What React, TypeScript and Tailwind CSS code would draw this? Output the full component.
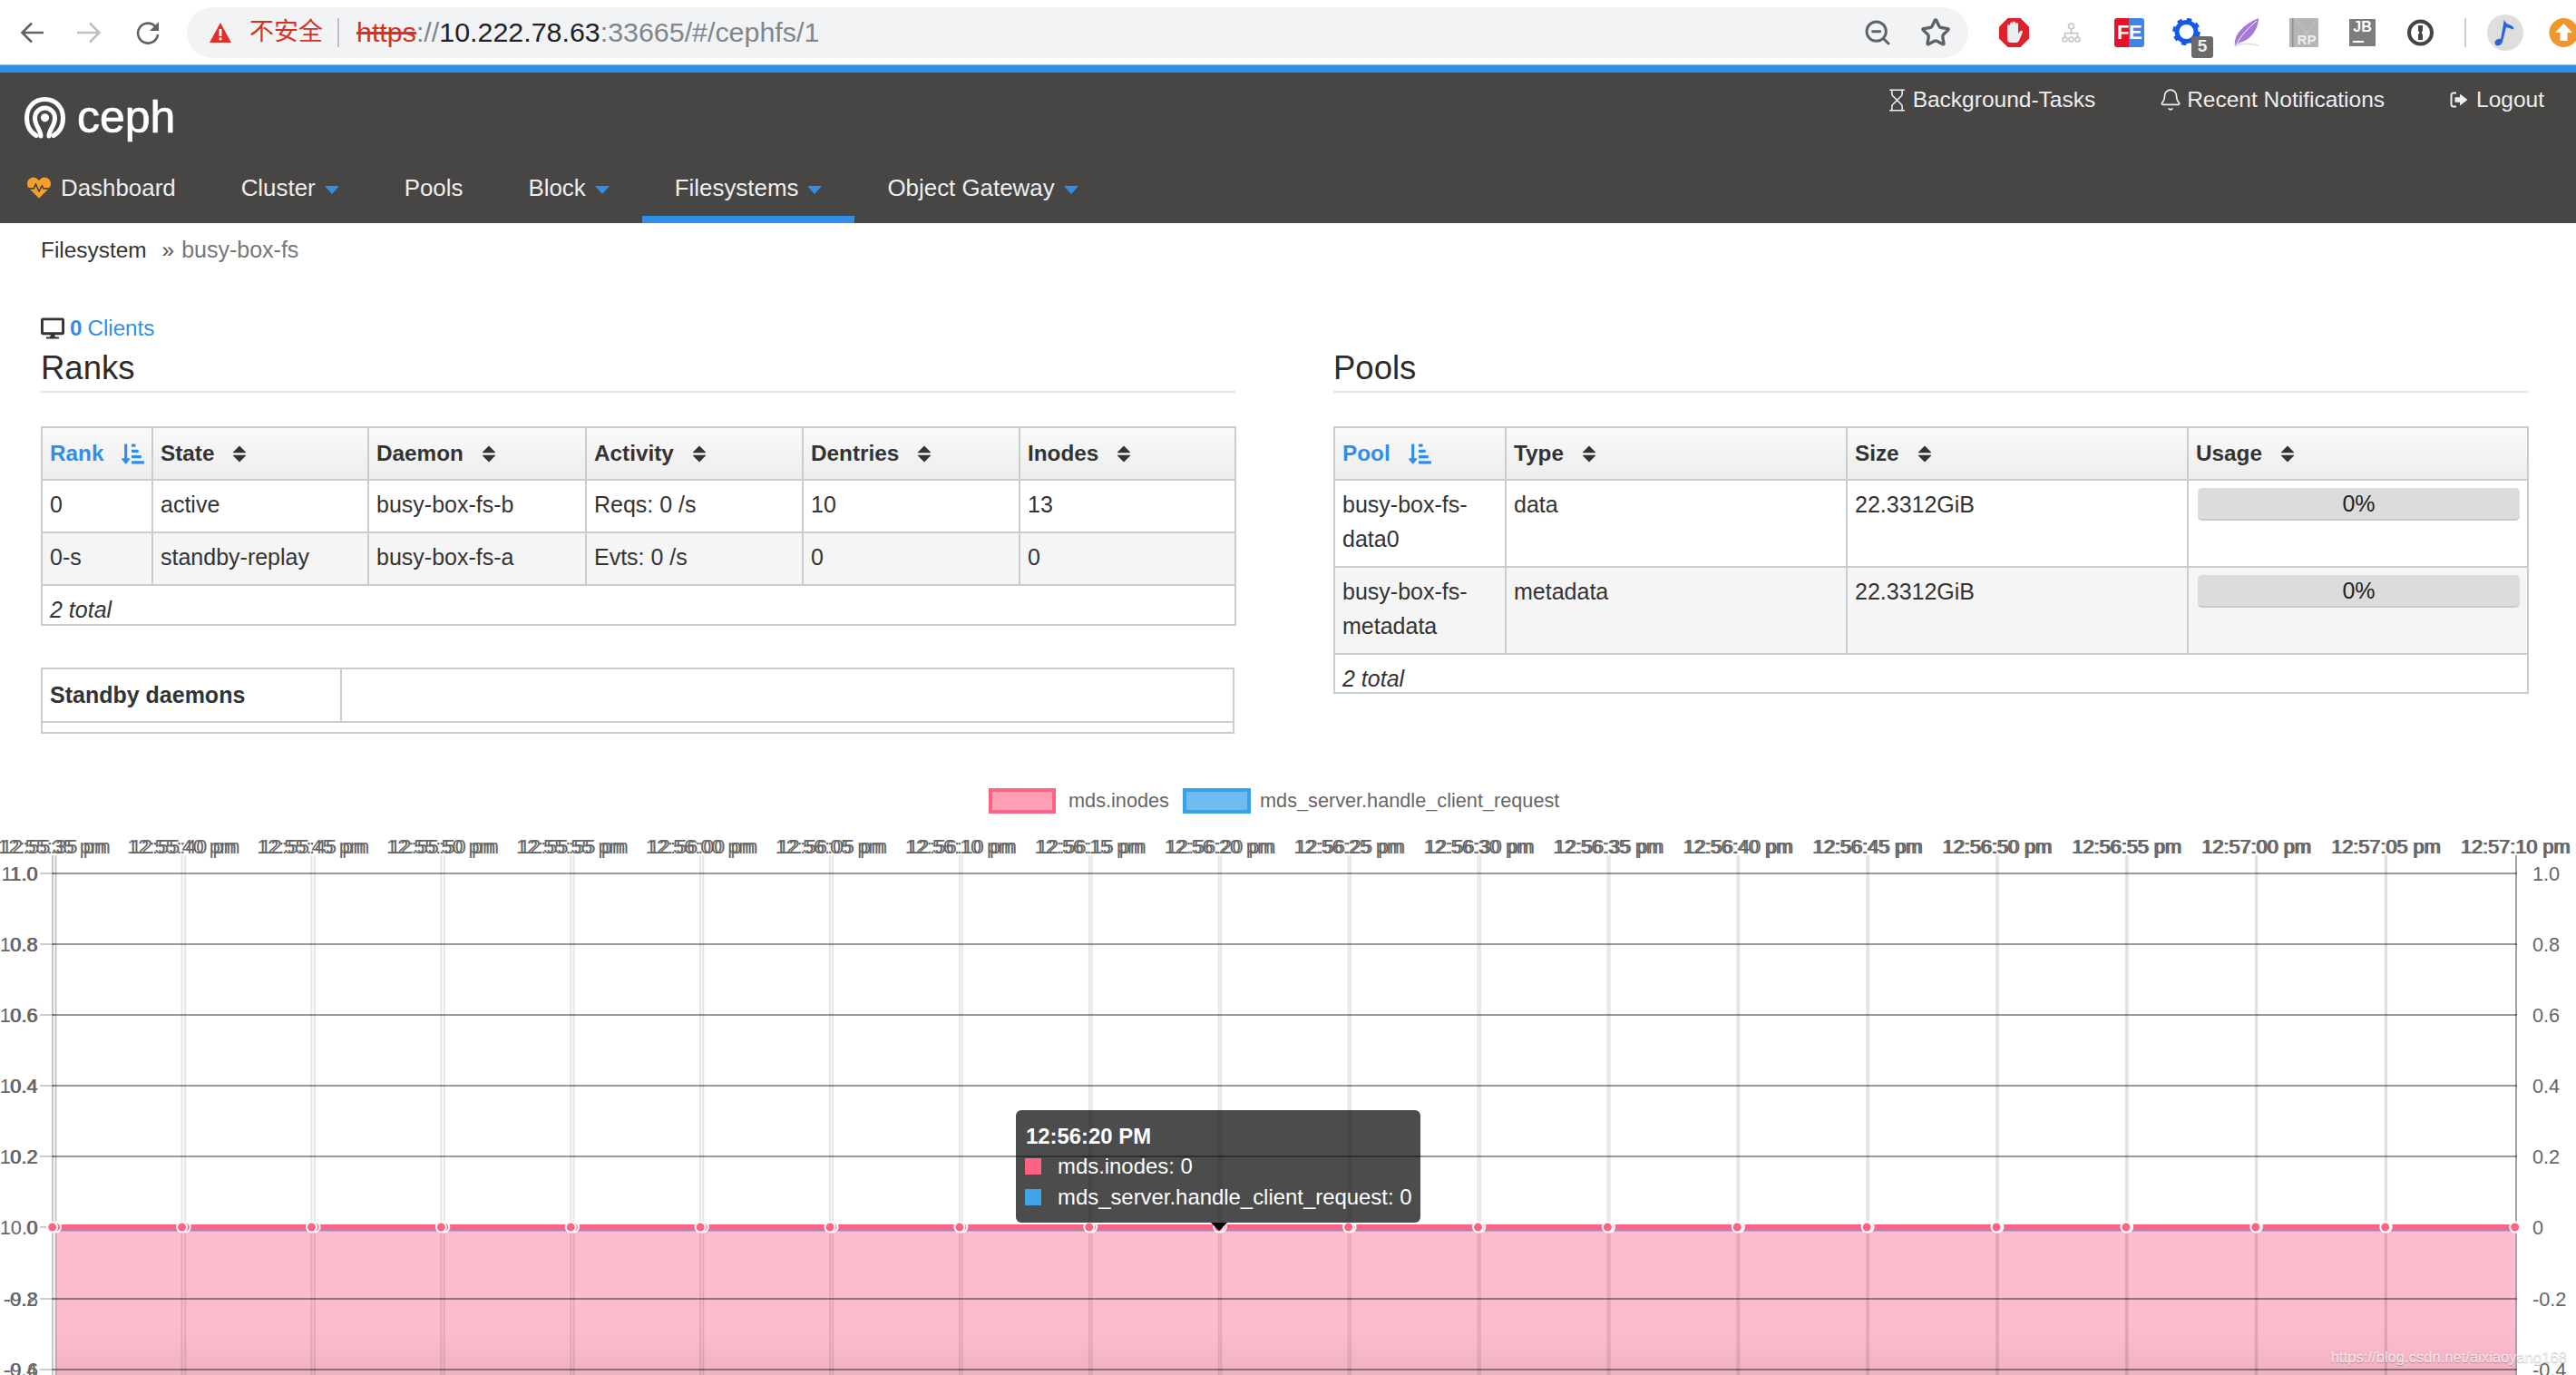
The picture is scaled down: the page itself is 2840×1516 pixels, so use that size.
import React from "react";
import { FaDesktop, FaHeartbeat, FaSortAmountDownAlt } from "react-icons/fa";
import { Bell, Hourglass, Star, ZoomOut } from "lucide-react";

const CHART_TOP = 860;
const Y_ROWS = [963, 1041, 1119, 1197, 1275, 1353, 1432, 1510];
const LEFT_A = ["11.0", "10.8", "10.6", "10.4", "10.2", "10.0", "-9.8", "-9.6"];
const LEFT_B = ["1.0", "0.8", "0.6", "0.4", "0.2", "0", "-0.2", "-0.4"];

// the page has two charts drawn on top of each other, the offset fades towards the right
const xA = (i: number) => 57.7 + 142.89 * i;
const xB = (i: number) => 61.5 + 142.76 * i;
const POINTS = Array.from({ length: 20 }, (_, i) => i);

const timeLabel = (i: number) => {
  const total = 12 * 3600 + 55 * 60 + 35 + i * 5;
  const m = Math.floor(total / 60) % 60;
  const s = total % 60;
  return `12:${String(m).padStart(2, "0")}:${String(s).padStart(2, "0")} pm`;
};

const Caret = () => (
  <span className="ml-[10px] mt-[4px] h-0 w-0 border-x-[8px] border-t-[9px] border-x-transparent border-t-[#2f8fe8]" />
);

const NavItem = ({ label, caret, active }: { label: string; caret?: boolean; active?: boolean }) => (
  <div
    className={`flex h-full items-center px-[36px] pt-[8px] border-b-[8px] ${
      active ? "border-[#2f8fe8]" : "border-transparent"
    }`}
  >
    <span>{label}</span>
    {caret && <Caret />}
  </div>
);

const SortArrows = () => (
  <svg width="16" height="19" viewBox="0 0 16 19" className="ml-[20px] shrink-0">
    <path d="M8 0.5 L15 7.5 Q15.5 8.2 14.5 8.2 L1.5 8.2 Q0.5 8.2 1 7.5 Z" fill="#333" />
    <path d="M8 18.5 L15 11.5 Q15.5 10.8 14.5 10.8 L1.5 10.8 Q0.5 10.8 1 11.5 Z" fill="#333" />
  </svg>
);

const HeaderCell = ({ label, sorted }: { label: string; sorted?: boolean }) => (
  <th className="border-2 border-[#ccc] bg-gradient-to-b from-[#fafafa] to-[#ededed] px-[8px] text-left align-middle text-[24.3px]">
    <div className={`flex items-center font-bold ${sorted ? "text-[#2f8fe8]" : "text-[#333]"}`}>
      <span>{label}</span>
      {sorted ? <FaSortAmountDownAlt size={25} className="ml-[20px] shrink-0" /> : <SortArrows />}
    </div>
  </th>
);

const Cell = ({ children }: { children: React.ReactNode }) => (
  <td className="border-2 border-[#ccc] px-[8px] pt-[7px] align-top">{children}</td>
);

const Usage = () => (
  <td className="border-2 border-[#ccc] pl-[10px] pr-[8px] pt-[8px] align-top">
    <div className="flex h-[36px] items-center justify-center rounded-[5px] border-b-2 border-[#c9c9c9] bg-[#dcdcdc] text-[#222]">
      0%
    </div>
  </td>
);

const SectionTitle = ({ title }: { title: string }) => (
  <div className="flex h-[52px] items-center border-b-2 border-[#e6e6e6] text-[36.5px] text-[#2b2b2b]">
    {title}
  </div>
);

const RanksTable = () => (
  <table className="mt-[37px] w-[1316px] table-fixed border-collapse leading-[38px]">
    <colgroup>
      <col className="w-[122px]" />
      <col className="w-[238px]" />
      <col className="w-[240px]" />
      <col className="w-[239px]" />
      <col className="w-[239px]" />
      <col className="w-[238px]" />
    </colgroup>
    <thead>
      <tr className="h-[58px]">
        <HeaderCell label="Rank" sorted />
        <HeaderCell label="State" />
        <HeaderCell label="Daemon" />
        <HeaderCell label="Activity" />
        <HeaderCell label="Dentries" />
        <HeaderCell label="Inodes" />
      </tr>
    </thead>
    <tbody>
      <tr className="h-[58px]">
        <Cell>0</Cell>
        <Cell>active</Cell>
        <Cell>busy-box-fs-b</Cell>
        <Cell>Reqs: 0 /s</Cell>
        <Cell>10</Cell>
        <Cell>13</Cell>
      </tr>
      <tr className="h-[58px] bg-[#f5f5f5]">
        <Cell>0-s</Cell>
        <Cell>standby-replay</Cell>
        <Cell>busy-box-fs-a</Cell>
        <Cell>Evts: 0 /s</Cell>
        <Cell>0</Cell>
        <Cell>0</Cell>
      </tr>
      <tr className="h-[44px]">
        <td colSpan={6} className="border-2 border-[#ccc] px-[8px] pt-[11px] align-top italic leading-[30px]">
          2 total
        </td>
      </tr>
    </tbody>
  </table>
);

const PoolsTable = () => (
  <table className="mt-[37px] w-[1316px] table-fixed border-collapse leading-[38px]">
    <colgroup>
      <col className="w-[189px]" />
      <col className="w-[376px]" />
      <col className="w-[376px]" />
      <col className="w-[375px]" />
    </colgroup>
    <thead>
      <tr className="h-[58px]">
        <HeaderCell label="Pool" sorted />
        <HeaderCell label="Type" />
        <HeaderCell label="Size" />
        <HeaderCell label="Usage" />
      </tr>
    </thead>
    <tbody>
      <tr className="h-[96px]">
        <Cell>busy-box-fs-data0</Cell>
        <Cell>data</Cell>
        <Cell>22.3312GiB</Cell>
        <Usage />
      </tr>
      <tr className="h-[96px] bg-[#f5f5f5]">
        <Cell>busy-box-fs-metadata</Cell>
        <Cell>metadata</Cell>
        <Cell>22.3312GiB</Cell>
        <Usage />
      </tr>
      <tr className="h-[43px]">
        <td colSpan={4} className="border-2 border-[#ccc] px-[8px] pt-[11px] align-top italic leading-[30px]">
          2 total
        </td>
      </tr>
    </tbody>
  </table>
);

const StandbyTable = () => (
  <table className="mt-[46px] w-[1316px] table-fixed border-collapse">
    <colgroup>
      <col className="w-[330px]" />
      <col />
    </colgroup>
    <tbody>
      <tr className="h-[59px]">
        <td className="border-2 border-[#ccc] px-[8px] align-middle font-bold text-[#333]">Standby daemons</td>
        <td className="border-2 border-[#ccc]" />
      </tr>
      <tr className="h-[12px]">
        <td colSpan={2} className="border-2 border-[#ccc]" />
      </tr>
    </tbody>
  </table>
);

const CephLogo = () => (
  <svg width="45" height="46" viewBox="0 0 45 46" fill="none" stroke="#fff" strokeWidth="5" strokeLinecap="round">
    <path d="M13 42.5C6 38.5 2.5 31 2.5 23C2.5 11 11 2.5 22.5 2.5C34 2.5 42.5 11 42.5 23C42.5 31 39 38.5 32 42.5" />
    <path d="M18 43C18 36 11.5 32 11.5 23C11.5 17 16.5 12 22.5 12C28.5 12 33.5 17 33.5 23C33.5 32 27 36 27 43" />
    <circle cx="22.5" cy="22.8" r="4.6" fill="#fff" stroke="none" />
  </svg>
);

const LogoutIcon = () => (
  <svg width="20" height="20" viewBox="0 0 20 20" className="mr-[9px]">
    <path d="M7 2.5H4Q1.5 2.5 1.5 5V15Q1.5 17.5 4 17.5H7" fill="none" stroke="#eee" strokeWidth="2" />
    <path d="M11 3.5L19.5 10L11 16.5V12.8H5.5V7.2H11Z" fill="#eee" />
  </svg>
);

const AdBlock = () => (
  <svg width="33" height="32" viewBox="0 0 33 32">
    <path d="M9.5 0H23.5L33 9.5V22.5L23.5 32H9.5L0 22.5V9.5Z" fill="#e0202a" />
    <path
      d="M9 14V8.5a1.5 1.5 0 0 1 3 0V6a1.5 1.5 0 0 1 3 0V5a1.5 1.5 0 0 1 3 0V6.5a1.5 1.5 0 0 1 3 0V17l2.5-3a1.5 1.5 0 0 1 2.3 1.8L22 25a4 4 0 0 1-3.5 2H13a4 4 0 0 1-4-4Z"
      fill="#eee"
    />
  </svg>
);

const Sitemap = () => (
  <svg width="21" height="22" viewBox="0 0 21 22" fill="none" stroke="#c4c4c4" strokeWidth="1.6">
    <circle cx="10.5" cy="4" r="3" />
    <path d="M10.5 7V13M3.5 16V11.5H17.5V16" />
    <circle cx="3.5" cy="18.5" r="2.5" />
    <circle cx="10.5" cy="18.5" r="2.5" />
    <circle cx="17.5" cy="18.5" r="2.5" />
  </svg>
);

const FeIcon = () => (
  <div className="relative flex h-[32px] w-[33px] items-center justify-center overflow-hidden rounded-[3px] bg-[linear-gradient(90deg,#e8112b_0,#e8112b_50%,#3f85e6_50%,#3f85e6_100%)] text-[22px] font-bold leading-none tracking-[-0.5px] text-white">
    FE
  </div>
);

const GearBadge = () => (
  <div className="relative h-[44px] w-[45px]">
    <svg width="31" height="30" viewBox="0 0 31 30" fill="none" stroke="#1558e8" className="absolute left-0 top-0">
      <circle cx="15.5" cy="15" r="10.5" strokeWidth="5" />
      <circle cx="15.5" cy="15" r="13.5" strokeWidth="3.5" strokeDasharray="5.4 5.2" />
    </svg>
    <div className="absolute left-[21px] top-[20px] flex h-[24px] w-[24px] items-center justify-center rounded-[3px] bg-[#6b6b6b] text-[19px] font-bold text-[#eee]">
      5
    </div>
  </div>
);

const Feather = () => (
  <svg width="28" height="32" viewBox="0 0 28 32">
    <path d="M1 31C-1 20 8 8 27 0C27 10 20 24 6 27Z" fill="#a57ad6" />
    <path d="M2 30C7 20 14 12 25 3" stroke="#fff" strokeWidth="1" fill="none" />
    <path d="M1 31C8 27 18 28 27 30" stroke="#ddd" strokeWidth="1.5" fill="none" />
  </svg>
);

const RpIcon = () => (
  <svg width="32" height="32" viewBox="0 0 32 32">
    <rect width="32" height="32" fill="#b5b5b5" />
    <rect x="3" width="1.5" height="32" fill="#8f8f8f" />
    <path d="M6 0L32 32M32 0L6 32" stroke="#c6c6c6" strokeWidth="1" />
    <text x="19" y="29" textAnchor="middle" fontSize="15" fontWeight="700" fill="#eee">
      RP
    </text>
  </svg>
);

const JbIcon = () => (
  <div className="relative h-[30px] w-[29px] bg-[#7d7d7d] text-center text-[16px] font-bold leading-[18px] text-white">
    JB
    <span className="absolute bottom-[4px] left-[4px] h-[2px] w-[12px] bg-white" />
  </div>
);

const OnePassword = () => (
  <svg width="29" height="30" viewBox="0 0 29 30">
    <circle cx="14.5" cy="15" r="12.5" fill="#fff" stroke="#444" strokeWidth="4" />
    <path d="M12 7H17V12.5L15.8 15L17 17.5V23H12V17L13.5 15L12 13Z" fill="#444" />
  </svg>
);

const MusicAvatar = () => (
  <div className="flex h-[40px] w-[40px] items-center justify-center rounded-full bg-[#dedede]">
    <svg width="24" height="32" viewBox="0 0 24 32">
      <path
        d="M11 1C11 6 17 7 20 9C22.5 10.5 21 13.5 19 12C17 10.5 14 10.5 13 10L9 26C8 30 3 32 1 29C-1 26 3 22 7 23Z"
        fill="#2f62d8"
      />
    </svg>
  </div>
);

const UpdateBadge = () => (
  <svg width="33" height="32" viewBox="0 0 33 32" className="shrink-0">
    <circle cx="16.5" cy="16" r="16" fill="#f0962a" />
    <path d="M16.5 6L26 16H20.5V25H12.5V16H7Z" fill="#fff" />
  </svg>
);

const BrowserBar = () => (
  <div className="flex h-[71px] items-center overflow-hidden bg-white pl-[22px]">
    <svg width="26" height="24" viewBox="0 0 26 24" fill="none" stroke="#5f6368" strokeWidth="2.6" className="shrink-0">
      <path d="M26 12H3M13 1.5L2.5 12L13 22.5" />
    </svg>
    <svg width="27" height="24" viewBox="0 0 27 24" fill="none" stroke="#bdc0c4" strokeWidth="2.6" className="ml-[37px] shrink-0">
      <path d="M0 12H24M14 1.5L24.5 12L14 22.5" />
    </svg>
    <svg width="26" height="26" viewBox="0 0 26 26" fill="none" className="ml-[38px] shrink-0">
      <path d="M21.5 6.5A11 11 0 1 0 24 15" stroke="#5f6368" strokeWidth="2.6" />
      <path d="M25 1V11H15Z" fill="#5f6368" />
    </svg>
    <div className="ml-[30px] flex h-[56px] w-[1964px] shrink-0 items-center rounded-full bg-[#f1f3f4] pl-[25px] pr-[19px]">
      <svg width="24" height="22" viewBox="0 0 24 22" className="shrink-0">
        <path d="M12 0L24 22H0Z" fill="#e0302a" />
        <rect x="10.6" y="7" width="2.8" height="8" fill="#fff" />
        <rect x="10.6" y="16.5" width="2.8" height="2.8" fill="#fff" />
      </svg>
      <span className="ml-[20px] font-['Liberation_Sans','Noto_Sans_CJK_SC',sans-serif] text-[27px] text-[#d93025]">不安全</span>
      <span className="ml-[16px] h-[32px] w-[2px] bg-[#bdc1c6]" />
      <div className="ml-[19px] text-[30.4px] leading-none text-[#80868b]">
        <span className="text-[#d93025] line-through">https</span>
        ://
        <span className="text-[#202124]">10.222.78.63</span>
        :33665/#/cephfs/1
      </div>
      <div className="flex-1" />
      <ZoomOut size={32} strokeWidth={2.2} color="#5f6368" />
      <Star size={34} strokeWidth={2.4} color="#5f6368" className="ml-[31px]" />
    </div>
    <div className="ml-[34px] shrink-0"><AdBlock /></div>
    <div className="ml-[36px] shrink-0"><Sitemap /></div>
    <div className="ml-[37px] shrink-0"><FeIcon /></div>
    <div className="ml-[31px] mt-[12px] shrink-0"><GearBadge /></div>
    <div className="ml-[23px] shrink-0"><Feather /></div>
    <div className="ml-[33px] shrink-0"><RpIcon /></div>
    <div className="ml-[34px] shrink-0"><JbIcon /></div>
    <div className="ml-[35px] shrink-0"><OnePassword /></div>
    <span className="ml-[34px] h-[32px] w-[2px] shrink-0 bg-[#ccc]" />
    <div className="ml-[23px] shrink-0"><MusicAvatar /></div>
    <div className="ml-[28px] shrink-0"><UpdateBadge /></div>
  </div>
);

const TopNav = () => (
  <div className="h-[175px] border-t border-[#b8b8b8]">
    <div className="h-[8px] bg-[#2f8fe8]" />
    <div className="h-[166px] bg-[#474645] text-[25.9px] text-[#eee]">
      <div className="flex h-[88px] justify-between">
        <div className="mt-[27px] flex pl-[27px]">
          <CephLogo />
          <span className="ml-[13px] -mt-[13px] text-[50px] leading-[70px] text-white [-webkit-text-stroke:0.7px_#fff]">ceph</span>
        </div>
        <div className="flex h-[60px] items-center pr-[35px] text-[24.5px]">
          <Hourglass size={27} strokeWidth={1.4} className="mr-[4px]" />
          <span>Background-Tasks</span>
          <Bell size={26} strokeWidth={1.5} className="ml-[70px] mr-[5px]" />
          <span>Recent Notifications</span>
          <span className="ml-[72px]" />
          <LogoutIcon />
          <span>Logout</span>
        </div>
      </div>
      <div className="flex h-[78px]">
        <div className="flex h-full items-center border-b-[8px] border-transparent pl-[30px] pr-[36px] pt-[8px]">
          <FaHeartbeat size={26} color="#f5a02c" className="mr-[11px]" />
          <span>Dashboard</span>
        </div>
        <NavItem label="Cluster" caret />
        <NavItem label="Pools" />
        <NavItem label="Block" caret />
        <NavItem label="Filesystems" caret active />
        <NavItem label="Object Gateway" caret />
      </div>
    </div>
  </div>
);

const Chart = () => (
  <div className="relative mt-[50px] h-[656px] overflow-hidden">
    <svg width="2840" height="656" viewBox={`0 ${CHART_TOP} 2840 656`} className="block font-['Liberation_Sans',sans-serif]">
      <defs>
        <linearGradient id="area" gradientUnits="userSpaceOnUse" x1="0" y1="1353" x2="0" y2="1516">
          <stop offset="0" stopColor="#fdbccd" />
          <stop offset="0.7" stopColor="#fdbccd" />
          <stop offset="1" stopColor="#eeb2c3" />
        </linearGradient>
      </defs>

      <rect x="1092" y="871" width="70" height="24" fill="#ff9fb5" stroke="#ff6384" strokeWidth="4" />
      <text x="1178" y="890" fontSize="21.7" fill="#666">mds.inodes</text>
      <rect x="1306" y="871" width="71" height="24" fill="#6fbcf0" stroke="#36a2eb" strokeWidth="4" />
      <text x="1389" y="890" fontSize="21.7" fill="#666">mds_server.handle_client_request</text>

      <rect x="61.5" y="1353" width="2712.5" height="170" fill="url(#area)" />

      {POINTS.map((i) => (
        <g key={i}>
          <text x={xA(i)} y="941" fontSize="21.7" fill="#666" textAnchor="middle">{timeLabel(i)}</text>
          <text x={xB(i)} y="941" fontSize="21.7" fill="#666" textAnchor="middle">{timeLabel(i)}</text>
        </g>
      ))}

      {POINTS.slice(1, 19).map((i) => (
        <g key={i} stroke="rgba(0,0,0,0.1)" strokeWidth="2">
          <line x1={xA(i)} y1="943" x2={xA(i)} y2="1516" />
          <line x1={xB(i)} y1="943" x2={xB(i)} y2="1516" />
        </g>
      ))}
      <line x1="58" y1="943" x2="58" y2="1516" stroke="rgba(0,0,0,0.22)" strokeWidth="2" />
      <line x1="61.5" y1="943" x2="61.5" y2="1516" stroke="rgba(0,0,0,0.22)" strokeWidth="2" />
      <line x1="2774" y1="943" x2="2774" y2="1516" stroke="#a3a3a3" strokeWidth="2" />

      {Y_ROWS.map((y, i) => (
        <g key={y}>
          <line x1="44" y1={y} x2="60" y2={y} stroke="rgba(0,0,0,0.2)" strokeWidth="2" />
          {i !== 5 && <line x1="58" y1={y} x2="2775" y2={y} stroke="rgba(0,0,0,0.4)" strokeWidth="2" />}
          <text x="42" y={y + 8} fontSize="21.7" fill="#666" textAnchor="end">{LEFT_A[i]}</text>
          <text x="41" y={y + 8} fontSize="21.7" fill="#666" textAnchor="end">{LEFT_B[i]}</text>
          <text x="2792" y={y + 8} fontSize="21.7" fill="#666">{LEFT_B[i]}</text>
        </g>
      ))}

      <line x1="58" y1="1354.5" x2="2773" y2="1354.5" stroke="#a08ac0" strokeWidth="6" />
      <line x1="58" y1="1353" x2="2773" y2="1353" stroke="#ff6384" strokeWidth="6" />
      {POINTS.map((i) => (
        <circle key={i} cx={xB(i)} cy="1353" r="5.5" fill="#ff6384" stroke="#fff" strokeWidth="2" />
      ))}
      {POINTS.map((i) => (
        <circle key={i} cx={xA(i)} cy="1353" r="5.5" fill="#ff6384" stroke="#fff" strokeWidth="2" />
      ))}
      <path d="M1335 1348H1353L1344 1357Z" fill="#000" />
    </svg>

    <div className="absolute left-[1120px] top-[364px] flex h-[124px] w-[446px] flex-col rounded-[6px] bg-black/70 pl-[10px] pt-[18px] text-[23.9px] leading-[22px] text-white">
      <div className="pl-[1px] font-bold">12:56:20 PM</div>
      <div className="mt-[11px] flex items-center">
        <span className="h-[18px] w-[18px] bg-[#ff6384]" />
        <span className="ml-[18px]">mds.inodes: 0</span>
      </div>
      <div className="mt-[12px] flex items-center">
        <span className="h-[18px] w-[18px] bg-[#3fa3ea]" />
        <span className="ml-[18px]">mds_server.handle_client_request: 0</span>
      </div>
    </div>

    <div className="absolute bottom-[10px] right-[10px] text-[16.6px] leading-none text-white/80 [text-shadow:0_1px_1px_rgba(0,0,0,0.3)]">
      https://blog.csdn.net/aixiaoyang168
    </div>
  </div>
);

export default function App() {
  return (
    <div className="h-[1516px] w-[2840px] overflow-hidden bg-white font-['Liberation_Sans',sans-serif] text-[25px] text-[#333]">
      <BrowserBar />
      <TopNav />
      <div className="flex h-[60px] items-center pl-[45px] text-[24.4px]">
        <span className="text-[#333]">Filesystem</span>
        <span className="ml-[17px] text-[#555]">»</span>
        <span className="ml-[8px] text-[25px] text-[#777]">busy-box-fs</span>
      </div>
      <div className="mt-[37px] flex h-[38px] items-center pl-[45px] text-[24.2px] text-[#2f8fe8]">
        <FaDesktop size={26} color="#333" />
        <span className="ml-[6px] font-bold">0</span>
        <span className="ml-[6px]">Clients</span>
      </div>
      <div className="grid h-[429px] grid-cols-[1317px_1317px] gap-x-[108px] pl-[45px]">
        <div>
          <SectionTitle title="Ranks" />
          <RanksTable />
          <StandbyTable />
        </div>
        <div>
          <SectionTitle title="Pools" />
          <PoolsTable />
        </div>
      </div>
      <Chart />
    </div>
  );
}
